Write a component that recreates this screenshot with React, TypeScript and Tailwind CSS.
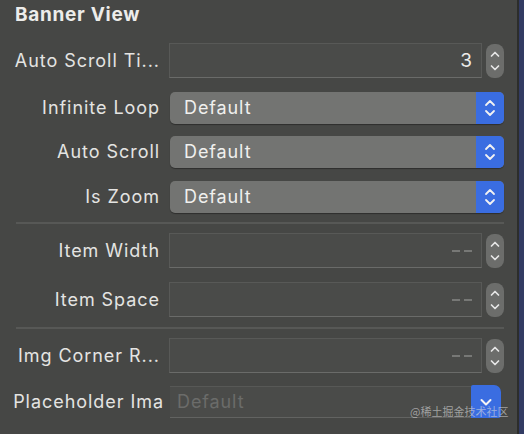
import React from "react";

const font = { fontFamily: "Inter, 'Noto Sans', 'Noto Sans CJK SC', sans-serif" };

function UpDown({ color = "#f2f2f2", w = 12 }: { color?: string; w?: number }) {
  return (
    <svg width={w} height="22" viewBox="0 0 12 22" fill="none">
      <path d="M2 8 L6 4 L10 8" stroke={color} strokeWidth="1.8" strokeLinecap="round" strokeLinejoin="round" />
      <path d="M2 14 L6 18 L10 14" stroke={color} strokeWidth="1.8" strokeLinecap="round" strokeLinejoin="round" />
    </svg>
  );
}

function Stepper() {
  return (
    <div className="ml-[4px] flex h-[34px] w-[18px] items-center justify-center rounded-[8px] bg-[#6c6d6b]">
      <svg width="12" height="26" viewBox="0 0 12 26" fill="none">
        <path d="M2.5 8 L6 4.5 L9.5 8" stroke="#e6e6e6" strokeWidth="1.7" strokeLinecap="round" strokeLinejoin="round" />
        <path d="M2.5 18 L6 21.5 L9.5 18" stroke="#e6e6e6" strokeWidth="1.7" strokeLinecap="round" strokeLinejoin="round" />
      </svg>
    </div>
  );
}

function Label({ children }: { children: React.ReactNode }) {
  return (
    <div className="w-[160px] shrink-0 whitespace-nowrap text-right text-[18px] leading-none tracking-[0.95px] text-[#e4e4e2]">
      {children}
    </div>
  );
}

function FieldRow({ label, value, dim }: { label: string; value: string; dim?: boolean }) {
  return (
    <div className="flex h-[35px] items-center">
      <Label>{label}</Label>
      <div className="ml-[9px] flex h-[35px] w-[313px] items-center justify-end border border-[#585957] border-b-[#6a6b69] bg-[#4a4b49] pr-[9px]">
        {dim ? (
          <span className="flex gap-[4px]">
            <span className="block h-[2px] w-[8px] bg-[#777876]" />
            <span className="block h-[2px] w-[8px] bg-[#777876]" />
          </span>
        ) : (
          <span className="text-[19px] leading-none text-[#ececea]">{value}</span>
        )}
      </div>
      <Stepper />
    </div>
  );
}

function PopupRow({ label }: { label: string }) {
  return (
    <div className="flex h-[32px] items-center">
      <Label>{label}</Label>
      <div className="ml-[10px] flex h-[32px] w-[334px] overflow-hidden rounded-[5px] bg-[#737472] shadow-[0_1px_1px_rgba(0,0,0,0.35)]">
        <div className="flex flex-1 items-center pl-[14px] text-[18px] leading-none tracking-[0.9px] text-[#f0f0ee]">Default</div>
        <div className="flex w-[28px] items-center justify-center bg-[#3a6de1]">
          <UpDown />
        </div>
      </div>
    </div>
  );
}

export default function App() {
  return (
    <div className="flex h-[434px] w-[524px] overflow-hidden bg-[#464745]" style={font}>
      <div className="relative w-[517px] shrink-0">
        <div className="pl-[15px] pt-[3px] text-[19px] font-bold leading-[24px] tracking-[0.7px] text-[#ececea]">Banner View</div>
        <div className="mt-[16px]">
          <FieldRow label="Auto Scroll Ti..." value="3" />
        </div>
        <div className="mt-[14px]">
          <PopupRow label="Infinite Loop" />
        </div>
        <div className="mt-[12px]">
          <PopupRow label="Auto Scroll" />
        </div>
        <div className="mt-[13px]">
          <PopupRow label="Is Zoom" />
        </div>
        <div className="ml-[16px] mt-[9px] h-[2px] w-[488px] bg-[#575856]" />
        <div className="mt-[9px]">
          <FieldRow label="Item Width" value="" dim />
        </div>
        <div className="mt-[14px]">
          <FieldRow label="Item Space" value="" dim />
        </div>
        <div className="ml-[16px] mt-[10px] h-[2px] w-[488px] bg-[#575856]" />
        <div className="mt-[9px]">
          <FieldRow label="Img Corner R..." value="" dim />
        </div>
        <div className="mt-[12px] flex h-[33px] items-center">
          <div className="-ml-[3px] w-[167px] shrink-0 whitespace-nowrap text-right text-[18px] leading-none tracking-[0.95px] text-[#e4e4e2]">
            Placeholder Ima
          </div>
          <div className="ml-[6px] flex h-[32px] w-[301px] items-center border-y border-[#575856] border-b-[#626361] bg-[#4a4b49] pl-[7px] text-[18px] leading-none tracking-[0.9px] text-[#6b6c6a]">
            Default
          </div>
          <div className="flex h-[33px] w-[30px] items-center justify-center rounded-tr-[7px] rounded-br-[3px] rounded-tl-[2px] bg-[#3a6de1]">
            <svg width="14" height="10" viewBox="0 0 14 10" fill="none">
              <path d="M2.5 3 L7 7.5 L11.5 3" stroke="#f4f4f4" strokeWidth="2" strokeLinecap="round" strokeLinejoin="round" />
            </svg>
          </div>
        </div>
        <div
          className="absolute left-[410px] top-[406px] whitespace-nowrap text-[11px] leading-none text-[rgba(220,220,220,0.6)]"
          style={{ fontFamily: "'Noto Sans CJK SC', sans-serif" }}
        >
          @稀土掘金技术社区
        </div>
      </div>
      <div className="w-[2px] shrink-0 bg-[#2c2d2b]" />
      <div className="flex-1 bg-[#323b63]" />
    </div>
  );
}
